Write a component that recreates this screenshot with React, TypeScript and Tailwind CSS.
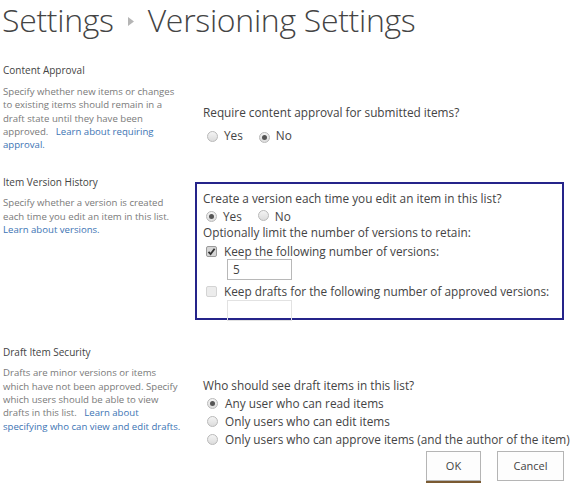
import React from "react";

const Radio = ({ checked = false }: { checked?: boolean }) => (
  <span className="inline-flex items-center justify-center w-[11px] h-[11px] rounded-full border border-[#b9b9b9] bg-gradient-to-b from-[#f4f4f4] to-[#dcdcdc] shrink-0">
    {checked && <span className="w-[5px] h-[5px] rounded-full bg-[#555]" />}
  </span>
);

const Check = ({ checked = false }: { checked?: boolean }) => (
  <span
    className={`inline-flex items-center justify-center w-[11px] h-[11px] rounded-[2px] border shrink-0 ${
      checked ? "border-[#9a9a9a] bg-[#d6d6d6]" : "border-[#d4d4d4] bg-[#ececec]"
    }`}
  >
    {checked && (
      <svg width="9" height="9" viewBox="0 0 9 9">
        <path d="M1.5 4.8 L3.6 7 L7.6 1.8" fill="none" stroke="#333" strokeWidth="1.8" />
      </svg>
    )}
  </span>
);

// descriptions keep the reference's line breaks
const Desc = ({ children }: { children: React.ReactNode }) => (
  <p className="whitespace-nowrap text-[9.6px] leading-[13.3px] text-[#7a7a7a]">{children}</p>
);

const Link = ({ children }: { children: React.ReactNode }) => (
  <span className="text-[#3c74b4]">{children}</span>
);

export default function App() {
  return (
    <div className="w-[571px] h-[483px] overflow-hidden bg-white font-['Open_Sans',sans-serif] text-[#444]">
      <div className="h-[40px] pl-[2px] flex items-center gap-[14px] text-[32px] font-light leading-[40px] text-[#444] tracking-[-0.3px]">
        <span>Settings</span>
        <svg width="6" height="9" viewBox="0 0 6 9" className="mt-[3px]">
          <path d="M0 0 L6 4.5 L0 9 Z" fill="#b5b5b5" />
        </svg>
        <span>Versioning Settings</span>
      </div>

      {/* Content Approval */}
      <div className="mt-[23px] flex">
        <div className="w-[195px] shrink-0 pl-[3px]">
          <h3 className="text-[10px] leading-[14px] text-[#444]">Content Approval</h3>
          <div className="mt-[8px]">
            <Desc>
              Specify whether new items or changes
              <br />
              to existing items should remain in a
              <br />
              draft state until they have been
              <br />
              approved. &nbsp; <Link>Learn about requiring</Link>
              <br />
              <Link>approval.</Link>
            </Desc>
          </div>
        </div>
        <div className="flex-1 pl-[8px]">
          <p className="mt-[41px] text-[11.8px] leading-[16px]">Require content approval for submitted items?</p>
          <div className="mt-[8px] h-[16px] flex items-center text-[11.8px] pl-[4px]">
            <Radio />
            <span className="ml-[6px]">Yes</span>
            <span className="ml-[16px]">
              <Radio checked />
            </span>
            <span className="ml-[6px]">No</span>
          </div>
        </div>
      </div>

      {/* Item Version History */}
      <div className="mt-[24px] flex">
        <div className="w-[195px] shrink-0 pl-[3px]">
          <h3 className="text-[10px] leading-[14px] text-[#444]">Item Version History</h3>
          <div className="mt-[7px]">
            <Desc>
              Specify whether a version is created
              <br />
              each time you edit an item in this list.
              <br />
              <Link>Learn about versions.</Link>
            </Desc>
          </div>
        </div>
        <div className="flex-1">
          <div className="mt-[7px] w-[369px] h-[138px] border-2 border-[#25248a] px-[6px] pt-[6px] text-[11.8px] whitespace-nowrap">
            <p className="leading-[16px]">Create a version each time you edit an item in this list?</p>
            <div className="mt-[2px] h-[16px] flex items-center pl-[3px]">
              <Radio checked />
              <span className="ml-[6px]">Yes</span>
              <span className="ml-[16px]">
                <Radio />
              </span>
              <span className="ml-[6px]">No</span>
            </div>
            <p className="leading-[16px]">Optionally limit the number of versions to retain:</p>
            <div className="mt-[3px] h-[16px] flex items-center pl-[3px]">
              <Check checked />
              <span className="ml-[7px]">Keep the following number of versions:</span>
            </div>
            <div className="ml-[24px] w-[65px] h-[21px] border border-[#b8b8b8] pl-[5px] leading-[19px]">5</div>
            <div className="mt-[3px] h-[16px] flex items-center pl-[3px]">
              <Check />
              <span className="ml-[7px]">Keep drafts for the following number of approved versions:</span>
            </div>
            <div className="mt-[1px] ml-[24px] w-[65px] h-[21px] border border-[#e2e2e2] bg-transparent" />
          </div>
        </div>
      </div>

      {/* Draft Item Security */}
      <div className="mt-[25px] flex">
        <div className="w-[195px] shrink-0 pl-[3px]">
          <h3 className="text-[10px] leading-[14px] text-[#444]">Draft Item Security</h3>
          <div className="mt-[7px]">
            <Desc>
              Drafts are minor versions or items
              <br />
              which have not been approved. Specify
              <br />
              which users should be able to view
              <br />
              drafts in this list. &nbsp; <Link>Learn about</Link>
              <br />
              <Link>specifying who can view and edit drafts.</Link>
            </Desc>
          </div>
        </div>
        <div className="flex-1 pl-[8px] text-[11.8px]">
          <p className="mt-[32px] leading-[16px]">Who should see draft items in this list?</p>
          <div className="mt-[1px] flex flex-col">
            {[
              ["Any user who can read items", true],
              ["Only users who can edit items", false],
              ["Only users who can approve items (and the author of the item)", false],
            ].map(([label, on]) => (
              <div key={label as string} className="h-[18px] flex items-center pl-[4px] whitespace-nowrap">
                <Radio checked={on as boolean} />
                <span className="ml-[7px]">{label as string}</span>
              </div>
            ))}
          </div>
          <div className="mt-[3px] flex justify-end gap-[16px] pr-[7px]">
            <div className="flex flex-col">
              <button className="w-[55px] h-[30px] border border-[#b5b5b5] bg-[#fdfdfd] text-[11px] text-[#444]">
                OK
              </button>
              <div className="h-[2px] bg-[#7a5a32]" />
            </div>
            <button className="w-[67px] h-[30px] border border-[#b5b5b5] bg-[#fdfdfd] text-[11px] text-[#444]">
              Cancel
            </button>
          </div>
        </div>
      </div>
    </div>
  );
}
